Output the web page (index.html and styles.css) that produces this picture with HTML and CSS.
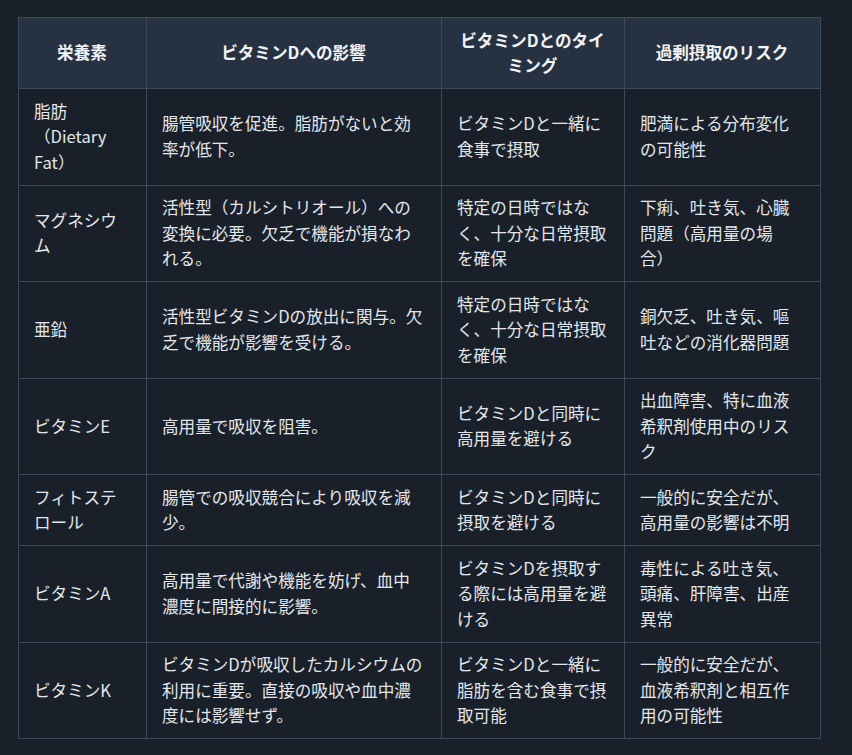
FILE: index.html
```html
<!DOCTYPE html>
<html lang="ja">
<head>
    <meta charset="UTF-8">
    <meta name="viewport" content="width=device-width, initial-scale=1.0">
    <title>ビタミンDと栄養素</title>
    <link rel="stylesheet" href="styles.css">
</head>
<body>
    <div class="wrap">
        <table class="nutri">
            <colgroup>
                <col class="c1">
                <col class="c2">
                <col class="c3">
                <col class="c4">
            </colgroup>
            <thead>
                <tr>
                    <th>栄養素</th>
                    <th>ビタミンDへの影響</th>
                    <th>ビタミンDとのタイミング</th>
                    <th>過剰摂取のリスク</th>
                </tr>
            </thead>
            <tbody>
                <tr>
                    <td>脂肪（Dietary Fat）</td>
                    <td>腸管吸収を促進。脂肪がないと効率が低下。</td>
                    <td>ビタミンDと一緒に食事で摂取</td>
                    <td>肥満による分布変化の可能性</td>
                </tr>
                <tr>
                    <td>マグネシウム</td>
                    <td>活性型（カルシトリオール）への変換に必要。欠乏で機能が損なわれる。</td>
                    <td>特定の日時ではなく、十分な日常摂取を確保</td>
                    <td>下痢、吐き気、心臓問題（高用量の場合）</td>
                </tr>
                <tr>
                    <td>亜鉛</td>
                    <td>活性型ビタミンDの放出に関与。欠乏で機能が影響を受ける。</td>
                    <td>特定の日時ではなく、十分な日常摂取を確保</td>
                    <td>銅欠乏、吐き気、嘔吐などの消化器問題</td>
                </tr>
                <tr>
                    <td>ビタミンE</td>
                    <td>高用量で吸収を阻害。</td>
                    <td>ビタミンDと同時に高用量を避ける</td>
                    <td>出血障害、特に血液希釈剤使用中のリスク</td>
                </tr>
                <tr>
                    <td>フィトステロール</td>
                    <td>腸管での吸収競合により吸収を減少。</td>
                    <td>ビタミンDと同時に摂取を避ける</td>
                    <td>一般的に安全だが、高用量の影響は不明</td>
                </tr>
                <tr>
                    <td>ビタミンA</td>
                    <td>高用量で代謝や機能を妨げ、血中濃度に間接的に影響。</td>
                    <td>ビタミンDを摂取する際には高用量を避ける</td>
                    <td>毒性による吐き気、頭痛、肝障害、出産異常</td>
                </tr>
                <tr>
                    <td>ビタミンK</td>
                    <td>ビタミンDが吸収したカルシウムの利用に重要。直接の吸収や血中濃度には影響せず。</td>
                    <td>ビタミンDと一緒に脂肪を含む食事で摂取可能</td>
                    <td>一般的に安全だが、血液希釈剤と相互作用の可能性</td>
                </tr>
            </tbody>
        </table>
    </div>
</body>
</html>
```

FILE: styles.css
```css
body {
    margin: 0;
    background: #19202a;
    color: #e3e7ec;
    font-family: "Noto Sans CJK JP", "Noto Sans", sans-serif;
}

.wrap {
    padding: 17px 18px;
}

.nutri {
    border-collapse: collapse;
    table-layout: fixed;
    width: 802px;
    font-size: 16.6px;
    line-height: 25.5px;
    text-spacing-trim: space-all;
}

.nutri .c1 { width: 128px; }
.nutri .c2 { width: 295px; }
.nutri .c3 { width: 183px; }
.nutri .c4 { width: 196px; }

.nutri th,
.nutri td {
    border: 1px solid #3b4a5b;
    padding: 9.5px 16px 9.5px 15px;
    vertical-align: middle;
    text-align: left;
}

.nutri th {
    background: #263241;
    color: #f1f3f6;
    font-weight: bold;
    text-align: center;
}

.nutri td {
    background: #19202a;
}
```
